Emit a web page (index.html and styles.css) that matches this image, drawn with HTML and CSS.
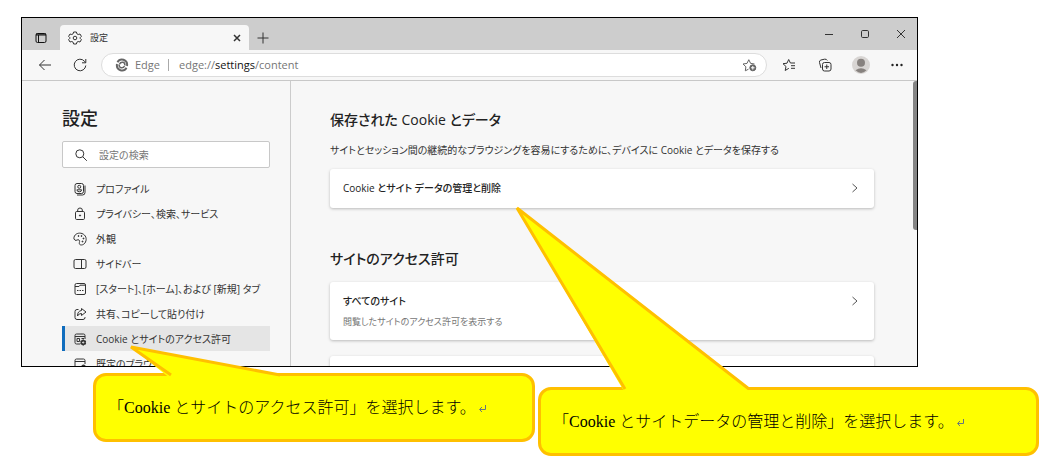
FILE: index.html
```
<!DOCTYPE html>
<html lang="ja">
<head>
  <meta charset="UTF-8">
  <meta name="viewport" content="width=device-width, initial-scale=1.0">
  <title>設定</title>
  <link rel="stylesheet" href="styles.css">
</head>
<body>
  <div class="browser">
    <div class="tab-strip">
      <button class="icon-btn tab-menu" aria-label="タブ操作メニュー">
        <svg width="12" height="12" viewBox="0 0 12 12"><rect x="1" y="1.5" width="10" height="9" rx="1.5"/><path d="M1 3h10M1 2h10M3.5 3v7"/></svg>
      </button>
      <div class="tab">
        <svg width="14" height="14" viewBox="0 0 14 14"><path d="M5.6 1h2.8l.5 1.8 1.3.7 1.8-.5 1.4 2.4-1.300 1.300v.6l1.300 1.300-1.400 2.400-1.800-.5-1.300.7-.5 1.800H5.600l-.5-1.800-1.300-.7-1.800.5L.6 8.600l1.300-1.300v-.6L.6 5.400 2 3l1.800.5 1.300-.7z"/><circle cx="7" cy="7" r="1.800"/></svg>
        <span class="tab-title">設定</span>
        <button class="icon-btn tab-close" aria-label="タブを閉じる">
          <svg width="8" height="8" viewBox="0 0 8 8"><path d="M1 1l6 6M7 1L1 7"/></svg>
        </button>
      </div>
      <button class="icon-btn new-tab" aria-label="新しいタブ">
        <svg width="12" height="12" viewBox="0 0 12 12"><path d="M6 .5v11M.5 6h11"/></svg>
      </button>
      <div class="window-controls">
        <button class="icon-btn" aria-label="最小化">
          <svg width="10" height="10" viewBox="0 0 10 10"><path d="M1 5.500h8"/></svg>
        </button>
        <button class="icon-btn" aria-label="最大化">
          <svg width="10" height="10" viewBox="0 0 10 10"><rect x="1.500" y="1.500" width="7" height="7" rx="1.200"/></svg>
        </button>
        <button class="icon-btn" aria-label="閉じる">
          <svg width="10" height="10" viewBox="0 0 10 10"><path d="M1 1l8 8M9 1L1 9"/></svg>
        </button>
      </div>
    </div>

    <div class="toolbar">
      <button class="icon-btn" aria-label="戻る">
        <svg width="14" height="12" viewBox="0 0 14 12"><path d="M13 6H1.500M6.500 1l-5 5 5 5"/></svg>
      </button>
      <button class="icon-btn" aria-label="更新">
        <svg width="14" height="14" viewBox="0 0 14 14"><path d="M12.800 7.500A5.800 5.800 0 1 1 11.500 3.300L12.600 4.600M12.800 1v3.800H9"/></svg>
      </button>
      <div class="address-bar">
        <svg class="edge-logo" width="14" height="14" viewBox="0 0 14 14"><path d="M2.500 4.200Q4.500 .6 8.500 1.800Q12.800 3.300 12 8"/><path d="M11.500 9.800Q9.500 13.400 5.500 12.200Q1.200 10.700 2 6"/><path class="swirl" d="M4.500 6.200Q5.500 3.800 8 4.300Q10.300 5 9.800 7.500M9.500 8Q8.500 10.200 6 9.700Q3.700 9 4.200 6.500"/></svg>
        <span class="site-name">Edge</span>
        <div class="url" role="textbox" tabindex="0" aria-label="アドレスバー">edge://<span class="host">settings</span>/content</div>
        <button class="icon-btn add-star" aria-label="お気に入りに追加">
          <svg width="15" height="14" viewBox="0 0 15 14"><path d="M6.500 11.200L3.300 12.800l.6-4L1 6l4-.6L6.800 1.700 8.600 5.400l3.900.6"/><circle class="solid" cx="10.800" cy="9.800" r="3"/><path class="light" d="M10.800 8v3.600M9 9.800h3.600"/></svg>
        </button>
      </div>
      <div class="tools">
        <button class="icon-btn" aria-label="お気に入り">
          <svg width="14" height="14" viewBox="0 0 14 14"><path d="M6.800 10.300L3.200 12.500l.8-4L1 5.700l4-.5L6.700 1.500 8.400 5H13M9 7.700h4M9 10.300h4"/></svg>
        </button>
        <button class="icon-btn" aria-label="コレクション">
          <svg width="14" height="14" viewBox="0 0 14 14"><path d="M3 10L1.500 4.500Q1 2.600 2.900 2L6.500 1.200Q8.500 .8 9.300 2.500"/><rect x="4.500" y="4.500" width="8.500" height="8.500" rx="2"/><path d="M8.750 6.500v4.500M6.500 8.750H11"/></svg>
        </button>
        <button class="icon-btn" aria-label="プロファイル">
          <svg class="avatar" width="18" height="18" viewBox="0 0 18 18"><circle class="avatar-bg" cx="9" cy="9" r="9"/><circle cx="9" cy="6.700" r="4"/><path d="M3.500 14.300Q9 10 14.500 14.300Q9 19.500 3.500 14.300z"/></svg>
        </button>
        <button class="icon-btn" aria-label="設定など">
          <svg class="dots" width="12" height="4" viewBox="0 0 12 4"><circle cx="1.500" cy="2" r="1.200"/><circle cx="6" cy="2" r="1.200"/><circle cx="10.500" cy="2" r="1.200"/></svg>
        </button>
      </div>
    </div>

    <div class="content">
      <nav class="sidebar">
        <h1>設定</h1>
        <label class="search">
          <svg width="14" height="14" viewBox="0 0 14 14"><circle cx="5.800" cy="5.800" r="4"/><path d="M8.800 8.800l4 4"/></svg>
          <input type="search" placeholder="設定の検索" aria-label="設定の検索">
        </label>
        <ul class="menu">
          <li><a href="#profile">
            <svg width="14" height="14" viewBox="0 0 14 14"><rect x="2" y="1.500" width="8.500" height="10" rx="2"/><path d="M12 3.500v7q0 2.500-2.500 2.500H4"/><circle cx="6.250" cy="4.800" r="1.500"/><path d="M3.900 7.800h4.700q0 2-2.300 2t-2.400-2z"/></svg>
            プロファイル</a></li>
          <li><a href="#privacy">
            <svg width="14" height="14" viewBox="0 0 14 14"><rect x="2.500" y="4.500" width="9" height="8" rx="1.200"/><path d="M4.700 4.500V3q0-2 2.300-2t2.300 2v1.500"/><circle class="solid" cx="7" cy="8.500" r=".6"/></svg>
            プライバシー、検索、サービス</a></li>
          <li><a href="#appearance">
            <svg width="14" height="14" viewBox="0 0 14 14"><path d="M1 5.200C2 1.500 6 .5 9 1.500C13 3 14 7 12.500 10C11 13.500 6.500 13.800 6.300 11.500C6.200 10 7.300 9 6 8C4.700 7 3.500 9 2 8.200Q.4 7.200 1 5.200z"/><circle class="solid" cx="5.500" cy="4" r=".5"/><circle class="solid" cx="8.500" cy="4" r=".5"/><circle class="solid" cx="10.500" cy="6.500" r=".5"/><circle class="solid" cx="9.500" cy="9.500" r=".5"/></svg>
            外観</a></li>
          <li><a href="#sidebar">
            <svg width="14" height="14" viewBox="0 0 14 14"><rect x="1" y="2.500" width="12" height="9" rx="1.500"/><path d="M8.500 2.500v9"/></svg>
            サイドバー</a></li>
          <li><a href="#start">
            <svg width="14" height="14" viewBox="0 0 14 14"><rect x="2" y="1.500" width="10.500" height="11" rx="1.500"/><path d="M2 4.500h4l1-1.300h5.500"/><path d="M4 8.500h1.500M6.500 8.500H8M9 8.500h1.500"/></svg>
            [スタート]、[ホーム]、および [新規] タブ</a></li>
          <li><a href="#share">
            <svg width="14" height="14" viewBox="0 0 14 14"><path d="M5.500 2.500H4Q2 2.500 2 4.500v6q0 2 2 2h6q2 0 2-2V10"/><path d="M8.500 1.500L13 5 8.500 8.500v-2Q6 6.200 4.500 9 4.500 4 8.500 3.500z"/></svg>
            共有、コピーして貼り付け</a></li>
          <li><a class="selected" href="#content" aria-current="page">
            <svg width="14" height="14" viewBox="0 0 14 14"><path d="M7 12H3.500Q2 12 2 10.500v-7Q2 2 3.500 2h7Q12 2 12 3.500V7M2 4.500h10M4 6.500h2.500v3H4zM8.500 6.500H11"/><circle class="solid" cx="10.200" cy="10.500" r="2.200"/><path stroke-width="1.500" d="M10.200 7.500v6M7.600 9l5.200 3M12.800 9l-5.200 3"/><circle class="light" cx="10.200" cy="10.500" r=".6"/></svg>
            Cookie とサイトのアクセス許可</a></li>
          <li><a href="#default">
            <svg width="14" height="14" viewBox="0 0 14 14"><path d="M7 12H3.500Q2 12 2 10.500v-7Q2 2 3.500 2h7Q12 2 12 3.500V7M2 4.500h10"/><circle class="solid" cx="10.500" cy="10" r="2"/></svg>
            既定のブラウザー</a></li>
        </ul>
      </nav>

      <main class="main">
        <section>
          <h2>保存された Cookie とデータ</h2>
          <p class="description">サイトとセッション間の継続的なブラウジングを容易にするために、デバイスに Cookie とデータを保存する</p>
          <a class="card" href="#cookies">
            <span class="card-title">Cookie とサイト データの管理と削除</span>
            <svg width="8" height="10" viewBox="0 0 8 10"><path d="M1.500 1l4.500 4-4.500 4"/></svg>
          </a>
        </section>
        <section>
          <h2>サイトのアクセス許可</h2>
          <a class="card" href="#all">
            <span class="card-title">すべてのサイト
              <small>閲覧したサイトのアクセス許可を表示する</small>
            </span>
            <svg width="8" height="10" viewBox="0 0 8 10"><path d="M1.500 1l4.500 4-4.500 4"/></svg>
          </a>
          <div class="card"></div>
        </section>
      </main>
      <div class="scroll-thumb"></div>
    </div>
  </div>

  <!-- Callouts -->
  <div class="callout callout-site">
    <svg class="tail" width="160" height="36" viewBox="0 0 160 36"><path class="tail-fill" d="M78 35L38 3 184 31v4z"/><path class="tail-line" d="M78 31L38 3 187 31"/></svg>
    <p>「<span class="latin">Cookie</span> とサイトのアクセス許可」を選択します。<svg class="return" width="9" height="9" viewBox="0 0 9 9"><path d="M7.500 1v4.500H2M4 3L1.500 5.500 4 8"/></svg></p>
  </div>
  <div class="callout callout-data">
    <svg class="tail" width="240" height="190" viewBox="0 0 240 190"><path class="tail-fill" d="M111 188L3 3 234 183v5z"/><path class="tail-line" d="M111 184L3 3 235 184"/></svg>
    <p>「<span class="latin">Cookie</span> とサイトデータの管理と削除」を選択します。<svg class="return" width="9" height="9" viewBox="0 0 9 9"><path d="M7.500 1v4.500H2M4 3L1.500 5.500 4 8"/></svg></p>
  </div>
</body>
</html>
```
FILE: styles.css
```
* {
  box-sizing: border-box;
}

body {
  margin: 0;
  min-height: 100vh;
  position: relative;
  background-color: #fff;
  color: #333;
  font-family: "Open Sans", "Noto Sans CJK JP", sans-serif;
  font-size: 10px;
  line-height: 16px;
}

svg {
  display: block;
  flex: none;
  fill: none;
  stroke: currentColor;
  stroke-width: 1;
}

.solid {
  fill: currentColor;
}

.light {
  stroke: #fff;
}

.browser {
  display: flex;
  flex-direction: column;
  height: calc(100vh - 125px);
  margin: 17px 144px 0 21px;
  border: 1px solid #000;
  background-color: #f7f7f7;
  overflow: hidden;
  font-feature-settings: "palt";
}

.icon-btn {
  display: flex;
  align-items: center;
  justify-content: center;
  width: 32px;
  height: 24px;
  padding: 0;
  border: none;
  background: none;
  color: #333;
}

/* Tab strip */
.tab-strip {
  display: flex;
  align-items: flex-end;
  flex: none;
  height: 32px;
  padding-left: 3px;
  background-color: #cdcdcd;
}

.tab-menu {
  margin-right: 3px;
  color: #111;
}

.tab {
  display: flex;
  align-items: center;
  gap: 8px;
  width: 189px;
  height: 25px;
  padding: 0 0 0 8px;
  border-radius: 4px 4px 0 0;
  background-color: #f7f7f7;
}

.tab-title {
  flex: 1;
  font-size: 9px;
}

.tab-close {
  width: 24px;
}

.tab-close svg {
  stroke-width: 1.5;
}

.new-tab {
  width: 28px;
}

.window-controls {
  display: flex;
  align-self: center;
  gap: 4px;
  margin-left: auto;
}

/* Toolbar */
.toolbar {
  display: flex;
  align-items: center;
  flex: none;
  height: 31px;
  padding: 0 4px 0 7px;
  border-bottom: 1px solid #c8c8c8;
}

.toolbar > .icon-btn {
  margin-right: 3px;
}

.address-bar {
  display: flex;
  align-items: center;
  flex: 1;
  height: 24px;
  margin: 0 6px 0 2px;
  padding: 0 1px 0 13px;
  border: 1px solid #ddd;
  border-radius: 12px;
  background-color: #fff;
  color: #767676;
  font-size: 11px;
}

.edge-logo {
  color: #666;
  stroke-width: 2;
}

.swirl {
  stroke-width: 1.5;
}

.site-name {
  margin-left: 6px;
  padding-right: 8px;
  border-right: 1px solid #aaa;
  line-height: 12px;
}

.url {
  flex: 1;
  padding-left: 10px;
}

.host {
  color: #111;
}

.add-star {
  color: #666;
}

.tools {
  display: flex;
  gap: 4px;
}

.avatar,
.dots {
  fill: #87827f;
  stroke: none;
}

.avatar-bg {
  fill: #d8d5d3;
}

.dots {
  fill: #222;
}

/* Settings page */
.content {
  display: flex;
  flex: 1;
  min-height: 0;
}

.sidebar {
  flex: none;
  width: 269px;
  padding: 24px 20px 0 40px;
  border-right: 1px solid #ccc;
}

h1,
h2 {
  margin: 0;
  color: #222;
  font-weight: 500;
  line-height: 26px;
}

h1 {
  font-size: 18px;
}

h2 {
  font-size: 14px;
}

.search {
  display: flex;
  align-items: center;
  gap: 11px;
  height: 27px;
  margin-top: 10px;
  padding: 0 11px;
  border: 1px solid #c8c8c8;
  border-radius: 2px;
  background-color: #fff;
}

.search input {
  flex: 1;
  min-width: 0;
  padding: 0;
  border: none;
  outline: none;
  background: none;
  font: inherit;
}

.search input::placeholder {
  color: #767676;
}

.menu {
  margin: 8px 0 0;
  padding: 0;
  list-style: none;
}

.menu a {
  display: flex;
  align-items: center;
  gap: 9px;
  height: 25px;
  padding-left: 8px;
  border-left: 3px solid transparent;
  color: #333;
  text-decoration: none;
  white-space: nowrap;
}

.menu .selected {
  border-left-color: #0f6cbd;
  background-color: #e5e5e5;
}

.main {
  flex: 1;
  min-width: 0;
  padding: 26px 39px 0;
}

.main section {
  margin-bottom: 38px;
}

.description {
  margin: 9px 0 11px;
  white-space: nowrap;
}

.card {
  display: flex;
  align-items: flex-start;
  justify-content: space-between;
  min-height: 39px;
  margin-bottom: 16px;
  padding: 11px 15px 10px 13px;
  border-radius: 3px;
  background-color: #fff;
  box-shadow: 0 1px 3px rgba(0, 0, 0, 0.25);
  color: #222;
  text-decoration: none;
}

.card svg {
  margin-top: 3px;
  color: #555;
}

.card-title {
  font-weight: 500;
}

.card small {
  display: block;
  margin-top: 5px;
  color: #767676;
  font-size: 9px;
  font-weight: 400;
}

h2 + .card {
  margin-top: 10px;
}

.scroll-thumb {
  flex: none;
  width: 4px;
  height: 149px;
  border-radius: 3px 0 0 3px;
  background-color: #858585;
}

/* Callouts */
.callout {
  position: absolute;
  display: flex;
  align-items: center;
  height: 69px;
  border: 3px solid #ffc000;
  border-radius: 13px;
  background-color: #ff0;
  color: #000;
  font-family: "Liberation Serif", "Noto Sans CJK JP", serif;
  font-size: 16px;
  font-weight: 300;
  line-height: 24px;
  white-space: nowrap;
}

.callout p {
  margin: 0;
  padding-left: 12px;
}

.latin {
  font-weight: 400;
}

.callout-site {
  top: 373px;
  left: 93px;
  width: 442px;
}

.callout-data {
  top: 387px;
  left: 538px;
  width: 501px;
}

.tail {
  position: absolute;
  overflow: visible;
}

.callout-site .tail {
  top: -32px;
  left: -3px;
}

.callout-data .tail {
  top: -185px;
  left: -27px;
}

.tail-fill {
  fill: #ff0;
  stroke: none;
}

.tail-line {
  stroke: #ffc000;
  stroke-width: 3;
}

.return {
  display: inline-block;
  margin-left: 2px;
  color: #66757f;
}
```
